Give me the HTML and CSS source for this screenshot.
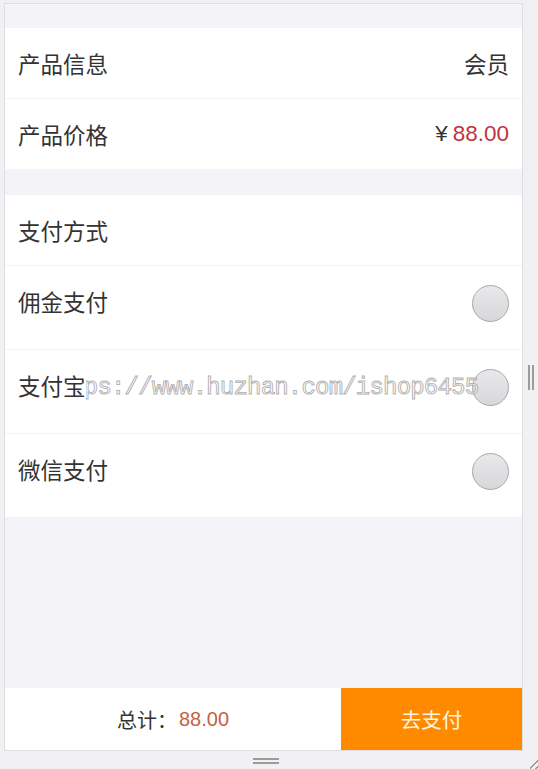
FILE: index.html
```html
<!DOCTYPE html>
<html>
<head>
<meta charset="utf-8">
<title>确认支付</title>
<link rel="stylesheet" href="styles.css">
</head>
<body>
    <div class="window">
        <div class="frame">
            <div class="gap-top"></div>

            <div class="section">
                <div class="row">
                    <span class="label">产品信息</span>
                    <span class="value">会员</span>
                </div>
                <div class="row">
                    <span class="label">产品价格</span>
                    <span class="value">¥<em class="price">88.00</em></span>
                </div>
            </div>

            <div class="gap-mid"></div>

            <div class="section">
                <div class="row">
                    <span class="label">支付方式</span>
                </div>
                <div class="row pay-row">
                    <span class="label">佣金支付</span>
                    <span class="radio"></span>
                </div>
                <div class="row pay-row">
                    <span class="label over">支付宝</span>
                    <span class="radio"></span>
                    <span class="watermark">https://www.huzhan.com/ishop6455</span>
                </div>
                <div class="row pay-row">
                    <span class="label">微信支付</span>
                    <span class="radio"></span>
                </div>
            </div>

            <div class="filler"></div>

            <div class="footer">
                <div class="total">总计：<span class="total-num">88.00</span></div>
                <button class="pay-btn">去支付</button>
            </div>
        </div>
        <div class="side-handle"><i></i><i></i></div>
    </div>
    <div class="bottom-bar">
        <div class="bottom-handle"><i></i><i></i></div>
        <div class="grip"></div>
    </div>
</body>
</html>
```

FILE: styles.css
```css
body {
    margin: 0;
    background-color: #f1f1f3;
    font-family: "Liberation Sans", "Noto Sans CJK SC", sans-serif;
    color: #333;
}

.window {
    display: flex;
    padding-top: 3px;
}

.frame {
    margin-left: 4px;
    width: 517px;
    height: 746px;
    border: 1px solid #dedde2;
    background-color: #f4f3f7;
    display: flex;
    flex-direction: column;
}

.gap-top {
    height: 24px;
}

.gap-mid {
    height: 26px;
}

.section {
    background-color: #fff;
}

.row {
    height: 70px;
    padding: 0 13px 0 13px;
    display: flex;
    align-items: center;
    justify-content: space-between;
    font-size: 22.5px;
    border-bottom: 1px solid #f2f2f4;
    position: relative;
}

.row:last-child {
    border-bottom: none;
}

.pay-row {
    padding-bottom: 13px;
}

.value {
    color: #333;
}

.price {
    font-style: normal;
    color: #c2333d;
    margin-left: 5px;
}

.radio {
    width: 35px;
    height: 35px;
    border-radius: 50%;
    border: 1px solid #a8a8ac;
    background: linear-gradient(#e9e9eb, #d7d7da);
    position: relative;
    z-index: 1;
    margin-top: 4px;
}

.watermark {
    position: absolute;
    left: 38px;
    top: 24px;
    font-family: "Liberation Mono", monospace;
    font-size: 24px;
    letter-spacing: -0.8px;
    color: rgba(255, 255, 255, 0.5);
    -webkit-text-stroke: 0.9px #b0b0b0;
    z-index: 2;
    white-space: nowrap;
}

.label.over {
    position: relative;
    z-index: 3;
    background-color: #fff;
}

.filler {
    flex: 1;
}

.footer {
    height: 62px;
    display: flex;
}

.total {
    flex: 1;
    background-color: #fff;
    display: flex;
    align-items: center;
    justify-content: center;
    font-size: 20px;
    color: #333;
}

.total-num {
    color: #c4623f;
    margin-left: 2px;
}

.pay-btn {
    width: 181px;
    border: none;
    background-color: #ff8a00;
    color: #fff6e0;
    font-family: inherit;
    font-size: 20.5px;
    padding: 0;
}

.side-handle {
    width: 15px;
    display: flex;
    justify-content: center;
    align-items: center;
    gap: 2px;
}

.side-handle i {
    width: 2px;
    height: 25px;
    background-color: #9c9c9c;
}

.bottom-bar {
    height: 18px;
    position: relative;
    display: flex;
    justify-content: center;
    padding-left: 4px;
    width: 523px;
}

.bottom-handle {
    display: flex;
    flex-direction: column;
    gap: 2px;
    margin-top: 7px;
}

.bottom-handle i {
    width: 26px;
    height: 2px;
    background-color: #9c9c9c;
}

.grip {
    position: absolute;
    right: -15px;
    bottom: 0;
    width: 12px;
    height: 12px;
    background: linear-gradient(135deg, transparent 45%, #999 45%, #999 52%, transparent 52%, transparent 70%, #999 70%, #999 77%, transparent 77%);
}
```
